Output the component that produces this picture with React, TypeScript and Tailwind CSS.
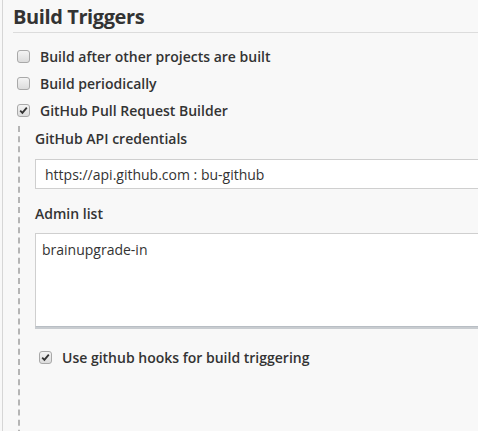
import React from "react";

function Box({ checked }: { checked?: boolean }) {
  return (
    <span className="flex h-[13px] w-[13px] shrink-0 items-center justify-center rounded-[3px] border border-[#a9a9a9] bg-gradient-to-b from-[#f4f4f4] to-[#dcdcdc]">
      {checked && (
        <svg width="9" height="9" viewBox="0 0 9 9">
          <path d="M1.2 4.6 L3.4 6.8 L7.8 1.6" fill="none" stroke="#333" strokeWidth="1.8" />
        </svg>
      )}
    </span>
  );
}

export default function App() {
  const font = { fontFamily: '"Open Sans", "Noto Sans", sans-serif' };
  return (
    <div className="h-[431px] w-[478px] overflow-hidden bg-[#f8f8f8] text-[#333]" style={font}>
      <div className="ml-[2px] h-full border-l border-[#d6d6d6] pl-[10px]">
        <div className="border-b border-[#dcdcdc] pb-[3px] pt-[4px]">
          <h2 className="text-[20px] font-bold leading-[25px] tracking-[-0.4px]">Build Triggers</h2>
        </div>
        <div className="flex flex-col pt-[10px]">
          <label className="flex h-[27px] items-center gap-[10px] pl-[4px]">
            <Box />
            <span className="text-[14px] font-semibold">Build after other projects are built</span>
          </label>
          <label className="flex h-[27px] items-center gap-[10px] pl-[4px]">
            <Box />
            <span className="text-[14px] font-semibold">Build periodically</span>
          </label>
          <label className="flex h-[27px] items-center gap-[10px] pl-[4px]">
            <Box checked />
            <span className="text-[14px] font-semibold">GitHub Pull Request Builder</span>
          </label>
        </div>
        <div className="ml-[5px] mt-[2px] h-[320px] border-l-[2px] border-dashed border-[#b5b5b5] pl-[15px]">
          <div className="pt-[3px] text-[14px] font-semibold leading-[20px]">GitHub API credentials</div>
          <div className="mt-[10px] flex h-[30px] w-[470px] items-center border border-[#cfcfcf] bg-white pl-[9px] text-[14px]">
            https://api.github.com : bu-github
          </div>
          <div className="mt-[15px] text-[14px] font-semibold leading-[20px]">Admin list</div>
          <div className="mt-[9px] h-[94px] w-[470px] border border-[#cfcfcf] border-b-[#b8bec4] bg-white pl-[6px] pt-[5px] text-[14px] shadow-[0_2px_0_#c8ccd0]">
            brainupgrade-in
          </div>
          <label className="mt-[20px] flex items-center gap-[10px] pl-[4px]">
            <Box checked />
            <span className="text-[14px] font-semibold">Use github hooks for build triggering</span>
          </label>
        </div>
      </div>
    </div>
  );
}
